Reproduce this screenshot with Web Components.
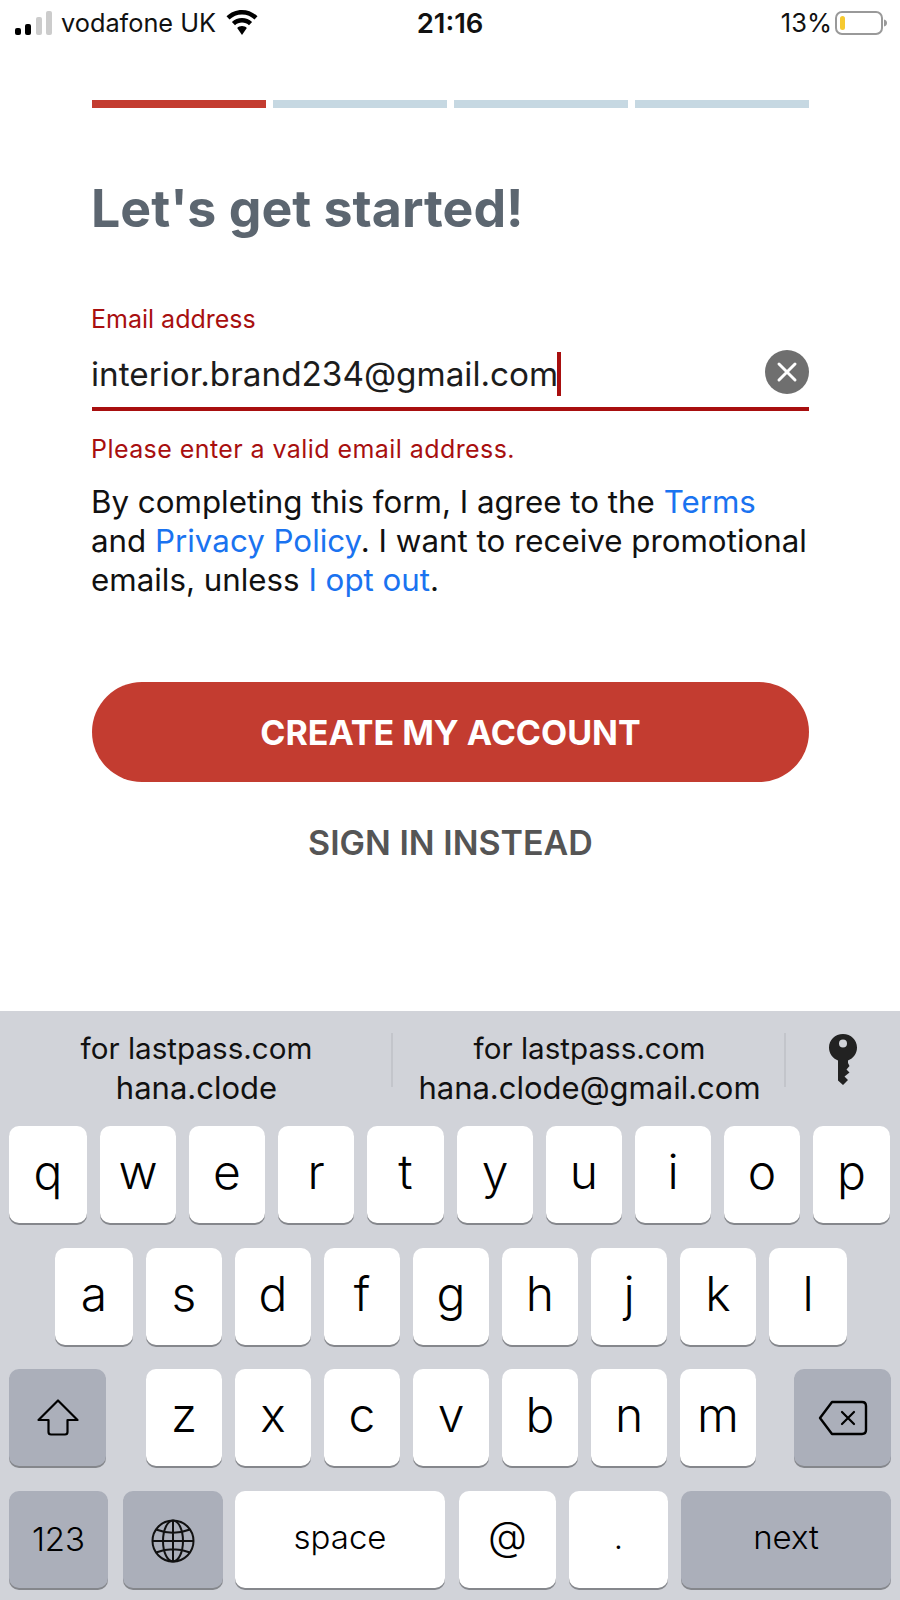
<!DOCTYPE html>
<html lang="en">
<head>
<meta charset="utf-8">
<title>Let's get started</title>
<style>
  html, body { margin: 0; padding: 0; background: #fff; }
  body { width: 900px; height: 1600px; overflow: hidden; font-family: Inter, "Noto Sans", sans-serif; }
</style>
</head>
<body>
<status-bar></status-bar>
<signup-form>
  <step-bar></step-bar>
  <h1>Let's get started!</h1>
  <email-field label="Email address" value="interior.brand234@gmail.com" error="Please enter a valid email address."></email-field>
  <terms-text>By completing this form, I agree to the <a>Terms</a> and <a>Privacy Policy</a>. I want to receive promotional emails, unless <a>I opt out</a>.</terms-text>
  <pill-button>CREATE MY ACCOUNT</pill-button>
  <text-button>SIGN IN INSTEAD</text-button>
</signup-form>
<ios-keyboard></ios-keyboard>

<script>
(function () {
  class StatusBar extends HTMLElement {
    constructor() {
      super();
      this.attachShadow({ mode: "open" });
      this.shadowRoot.innerHTML = `
        <style>
        :host{
            display:flex;
            align-items:center;
            box-sizing:border-box;
            height:47px;
            padding:0 13px 2px 15px;
            font-size:25.300px;
            color:#111;
        }
        .left{
            flex:1;
            display:flex;
            align-items:center;
        }
        .carrier{ margin-left:9px; }
        .wifi{ margin-left:10px; }
        .time{
            font-weight:600;
            font-size:27.500px;
            width:130px;
            margin-left:-2px;
            text-align:center;
        }
        .right{
            flex:1;
            display:flex;
            align-items:center;
            justify-content:flex-end;
            font-size:25.500px;
        }
        .battery{ margin-left:3px; }
        </style>
        <div class="left">
          <svg width="37" height="24" viewBox="0 0 37 24">
            <rect x="0" y="17" width="6" height="7" rx="2" fill="#000"/>
            <rect x="10" y="13" width="6" height="11" rx="2" fill="#000"/>
            <rect x="21" y="6" width="6" height="18" rx="2" fill="#ccc"/>
            <rect x="31" y="0" width="6" height="24" rx="2" fill="#ccc"/>
          </svg>
          <span class="carrier">vodafone UK</span>
          <svg class="wifi" width="32" height="25" viewBox="0 0 32 25">
            <path d="M16 0C10 0 4.600 2.400 0.500 6.300L3.500 9.500C6.800 6.300 11.200 4.400 16 4.400S25.200 6.300 28.500 9.500L31.500 6.300C27.400 2.400 22 0 16 0Z" fill="#000"/>
            <path d="M16 8C12.100 8 8.600 9.500 5.900 12L9 15.200C10.800 13.500 13.300 12.500 16 12.500S21.200 13.500 23 15.200L26.100 12C23.400 9.500 19.900 8 16 8Z" fill="#000"/>
            <path d="M16 16C14.100 16 12.400 16.700 11.200 17.900L16 25L20.800 17.900C19.600 16.700 17.900 16 16 16Z" fill="#000"/>
          </svg>
        </div>
        <div class="time">21:16</div>
        <div class="right">
          <span>13%</span>
          <svg class="battery" width="52" height="24" viewBox="0 0 52 24">
            <rect x="1" y="1" width="46" height="22" rx="6" fill="none" stroke="#999" stroke-width="2"/>
            <rect x="5" y="5" width="5" height="14" rx="2.500" fill="#f6c92f"/>
            <path d="M49 8.500C51 9 52 10.200 52 12S51 15 49 15.500Z" fill="#999"/>
          </svg>
        </div>
        `;
    }
  }

  class SignupForm extends HTMLElement {
    constructor() {
      super();
      this.attachShadow({ mode: "open" });
      this.shadowRoot.innerHTML = `
        <style>
        :host{
            display:flex;
            flex-direction:column;
            height:964px;
            padding:53px 91px 0 92px;
            box-sizing:border-box;
        }
        ::slotted(h1){
            margin:71px 0 0 -1px;
            font-size:51.850px;
            line-height:60px;
            font-weight:700;
            color:#5c6670;
        }
        </style>
        <slot></slot>
        `;
    }
  }

  class StepBar extends HTMLElement {
    constructor() {
      super();
      this.attachShadow({ mode: "open" });
      this.shadowRoot.innerHTML = `
        <style>
        :host{
            display:flex;
            gap:7px;
            height:8px;
        }
        div{ flex:1; background:#c6d8e2; }
        .on{ background:#c33c30; }
        </style>
        <div class="on"></div><div></div><div></div><div></div>
        `;
    }
  }

  class EmailField extends HTMLElement {
    constructor() {
      super();
      this.attachShadow({ mode: "open" });
      this.shadowRoot.innerHTML = `
        <style>
        :host{
            display:block;
            margin-top:65px;
            color:#a80f0f;
        }
        .label{
            font-size:25px;
            line-height:30px;
            margin-left:-1px;
        }
        .row{
            display:flex;
            align-items:center;
            justify-content:space-between;
            height:50px;
            margin-top:15px;
            padding-bottom:8px;
            border-bottom:4px solid #a80f0f;
        }
        .input{
            display:flex;
            align-items:center;
            font-size:33.300px;
            margin-left:-1px;
            color:#1c1c1c;
        }
        .caret{
            width:4px;
            height:44px;
            background:#a80f0f;
            margin-left:-1px;
        }
        .clear{ display:block; margin-top:-4px; }
        .error{
            font-size:25px;
            letter-spacing:.43px;
            line-height:30px;
            margin-top:23px;
            margin-left:-1px;
        }
        </style>
        <div class="label"></div>
        <div class="row">
          <div class="input"><span class="value"></span><span class="caret"></span></div>
          <svg class="clear" width="44" height="44" viewBox="0 0 44 44">
            <circle cx="22" cy="22" r="22" fill="#6f6f6f"/>
            <path d="M14 14L30 30M30 14L14 30" stroke="#fff" stroke-width="3" stroke-linecap="round"/>
          </svg>
        </div>
        <div class="error"></div>
        `;
    }

    connectedCallback() {
      this.render();
    }

    render() {
      const root = this.shadowRoot;
      root.querySelector(".label").textContent = this.getAttribute("label");
      root.querySelector(".value").textContent = this.getAttribute("value");
      root.querySelector(".error").textContent = this.getAttribute("error");
    }
  }

  class TermsText extends HTMLElement {
    constructor() {
      super();
      this.attachShadow({ mode: "open" });
      this.shadowRoot.innerHTML = `
        <style>
        :host{
            display:block;
            margin:19px -4px 0 -1px;
            font-size:31.300px;
            line-height:39px;
            color:#111;
        }
        ::slotted(a){ color:#1a73f0; }
        </style>
        <slot></slot>
        `;
    }
  }

  class PillButton extends HTMLElement {
    constructor() {
      super();
      this.attachShadow({ mode: "open" });
      this.shadowRoot.innerHTML = `
        <style>
        :host{
            display:flex;
            align-items:center;
            justify-content:center;
            height:100px;
            margin-top:82px;
            border-radius:50px;
            background:#c33c30;
            color:#fff;
            font-size:34px;
            font-weight:700;
        }
        </style>
        <slot></slot>
        `;
    }
  }

  class TextButton extends HTMLElement {
    constructor() {
      super();
      this.attachShadow({ mode: "open" });
      this.shadowRoot.innerHTML = `
        <style>
        :host{
            display:block;
            text-align:center;
            margin-top:41px;
            color:#555;
            font-size:34px;
            line-height:40px;
            font-weight:600;
        }
        </style>
        <slot></slot>
        `;
    }
  }

  class KbKey extends HTMLElement {
    constructor() {
      super();
      this.attachShadow({ mode: "open" });
      this.shadowRoot.innerHTML = `
        <style>
        :host{
            display:flex;
            align-items:center;
            justify-content:center;
            flex:none;
            box-sizing:border-box;
            width:76px;
            height:97px;
            padding-bottom:6px;
            border-radius:10px;
            background:#fff;
            box-shadow:0 2px 0 #85878c;
            font-size:48px;
            font-weight:300;
            color:#000;
        }
        :host([dark]){ background:#abafba; padding-bottom:0; }
        :host([small]){ font-size:33px; font-weight:350; padding-bottom:4px; }
        </style>
        <slot></slot>
        `;
    }
  }

  class KbSuggestion extends HTMLElement {
    constructor() {
      super();
      this.attachShadow({ mode: "open" });
      this.shadowRoot.innerHTML = `
        <style>
        :host{
            display:block;
            text-align:center;
            font-size:29.600px;
            line-height:40px;
            color:#111;
        }
        ::slotted(span){ font-size:31px; }
        </style>
        <slot></slot>
        `;
    }
  }

  class IosKeyboard extends HTMLElement {
    constructor() {
      super();
      this.attachShadow({ mode: "open" });
      const top = "qwertyuiop".split("");
      const mid = "asdfghjkl".split("");
      const low = "zxcvbnm".split("");
      const key = (k, style) => `<kb-key${style ? ` style="${style}"` : ""}>${k}</kb-key>`;
      this.shadowRoot.innerHTML = `
        <style>
        :host{
            display:block;
            height:589px;
            background:#d1d3d9;
            box-sizing:border-box;
        }
        .suggest{
            display:grid;
            grid-template-columns:393px 393px 114px;
            height:115px;
            box-sizing:border-box;
            padding-top:17px;
        }
        .cell{
            align-self:start;
        }
        .bordered{ position:relative; }
        .bordered::after{
            content:"";
            position:absolute;
            right:0;
            top:5px;
            width:2px;
            height:54px;
            background:#c3c5cb;
        }
        .keyicon{
            justify-self:center;
            margin-top:5px;
            margin-left:-1px;
        }
        .rows{
            display:flex;
            flex-direction:column;
            gap:24.67px;
        }
        .row{
            display:flex;
            gap:13px;
            padding-left:9px;
        }
        .row.mid{ padding-left:55px; }
        .row.last{ gap:0; }
        kb-key svg{ display:block; }
        .globe{ margin-top:4px; }
        </style>
        <div class="suggest">
          <kb-suggestion class="cell bordered">for lastpass.com<br><span>hana.clode</span></kb-suggestion>
          <kb-suggestion class="cell bordered">for lastpass.com<br><span>hana.clode@gmail.com</span></kb-suggestion>
          <svg class="keyicon" width="30" height="52" viewBox="0 0 30 52">
            <path fill-rule="evenodd" fill="#222" d="M15 1C7 1 1 7 1 14.500C1 20.500 4.700 25.500 10 27.500V47.500L15 52L20 47L16.500 43.500L21.500 39.500L18.500 36.500L21.500 33L20 30V27.500C25.300 25.500 29 20.500 29 14.500C29 7 23 1 15 1ZM15 6.500A4 4 0 1 1 15 14.500A4 4 0 1 1 15 6.500Z"/>
          </svg>
        </div>
        <div class="rows">
          <div class="row">${top.map((k, i) => key(k, i === 0 ? "width:78px" : i === 4 || i === 9 ? "width:77px" : "")).join("")}</div>
          <div class="row mid">${mid.map((k, i) => key(k, i === 0 || i === 8 ? "width:78px" : "")).join("")}</div>
          <div class="row">
            <kb-key dark style="width:97px;margin-right:27px">
              <svg width="42" height="37" viewBox="0 0 42 37"><path d="M21 1.500L40.500 21H30.500V33Q30.500 35.500 28 35.500H14Q11.500 35.500 11.500 33V21H1.500Z" fill="none" stroke="#000" stroke-width="2.200" stroke-linejoin="round"/></svg>
            </kb-key>
            ${low.map((k) => key(k)).join("")}
            <kb-key dark style="width:97px;margin-left:25px">
              <svg width="50" height="36" viewBox="0 0 50 36"><path d="M14 2H44Q48 2 48 6V30Q48 34 44 34H14L2 18Z" fill="none" stroke="#000" stroke-width="2.400" stroke-linejoin="round"/><path d="M24 12L36 24M36 12L24 24" stroke="#000" stroke-width="2.200" stroke-linecap="round"/></svg>
            </kb-key>
          </div>
          <div class="row last">
            <kb-key dark small style="width:99px;padding-bottom:0">123</kb-key>
            <kb-key dark style="width:100px;margin-left:15px">
              <svg class="globe" width="44" height="44" viewBox="0 0 44 44" fill="none" stroke="#111" stroke-width="2"><circle cx="22" cy="22" r="20.500"/><ellipse cx="22" cy="22" rx="10" ry="20.500"/><path d="M22 1.500V42.500M1.500 22H42.500M5 10.500Q22 17 39 10.500M5 33.500Q22 27 39 33.500"/></svg>
            </kb-key>
            <kb-key small style="width:210px;margin-left:12px">space</kb-key>
            <kb-key small style="width:97px;margin-left:14px;font-size:40px;font-weight:300;padding-bottom:8px">@</kb-key>
            <kb-key small style="width:99px;margin-left:13px">.</kb-key>
            <kb-key dark small style="width:210px;margin-left:13px;padding-bottom:4px">next</kb-key>
          </div>
        </div>
        `;
    }
  }

  customElements.define("status-bar", StatusBar);
  customElements.define("signup-form", SignupForm);
  customElements.define("step-bar", StepBar);
  customElements.define("email-field", EmailField);
  customElements.define("terms-text", TermsText);
  customElements.define("pill-button", PillButton);
  customElements.define("text-button", TextButton);
  customElements.define("kb-key", KbKey);
  customElements.define("kb-suggestion", KbSuggestion);
  customElements.define("ios-keyboard", IosKeyboard);
})();
</script>
</body>
</html>
